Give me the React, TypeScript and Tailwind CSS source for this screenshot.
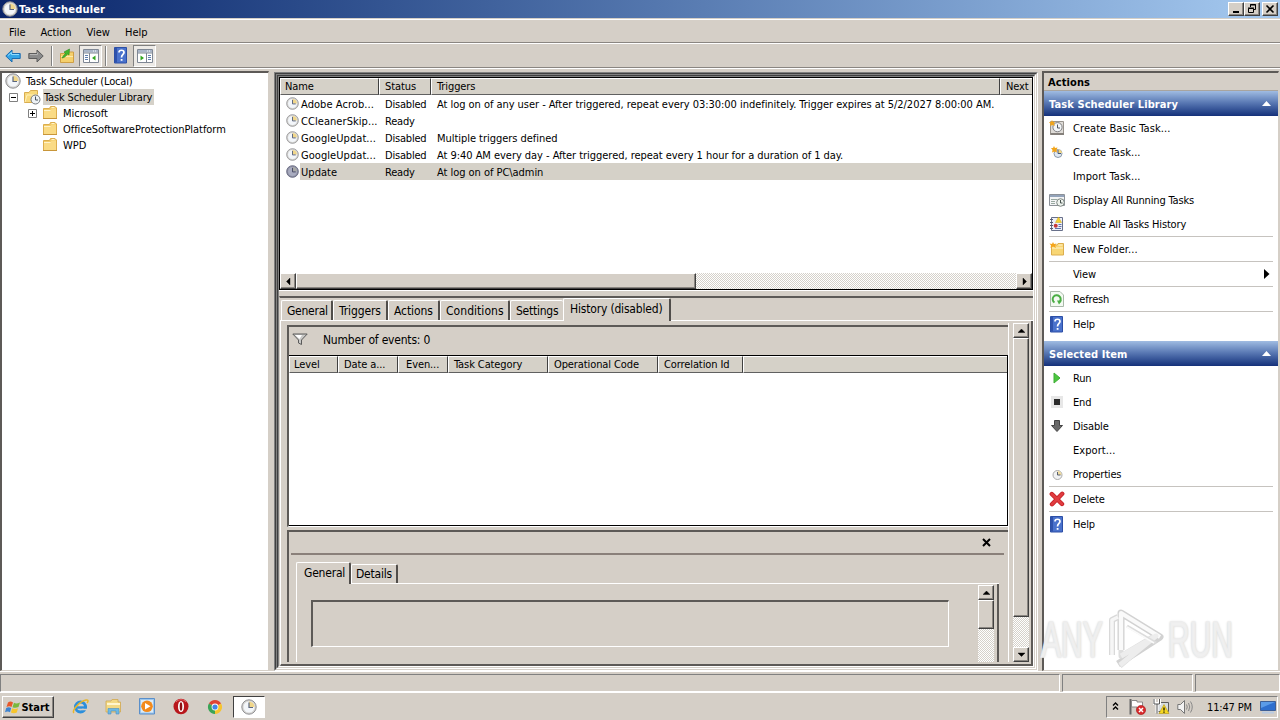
import React, { ReactNode } from "react";

interface BoxProps {
  className?: string;
  children?: ReactNode;
}

interface ActionItem {
  label: string;
  icon?: ReactNode;
  line?: boolean;
  arrow?: boolean;
}

/* ---------- Icons ---------- */

function ClockIcon({ size = 16, dark = false }: { size?: number; dark?: boolean }) {
  return (
    <svg width={size} height={size} viewBox="0 0 16 16" className="shrink-0">
      <circle cx="8" cy="8" r="7.2" fill={dark ? "#8e90a4" : "#d6d5d2"} stroke={dark ? "#5d5f78" : "#8f8f93"} strokeWidth="1" />
      <circle cx="8" cy="8" r="5.5" fill={dark ? "#a9acc0" : "#f3f6fa"} />
      <path d="M8 8V2.5A5.5 5.5 0 0 1 13.5 8z" fill={dark ? "#a8a9a6" : "#f0d68a"} />
      <path d="M8 3.5V8.5H12" fill="none" stroke={dark ? "#4a4c66" : "#5b6680"} strokeWidth="1.2" />
    </svg>
  );
}

function FolderIcon() {
  return (
    <svg width="16" height="16" viewBox="0 0 16 16" className="shrink-0">
      <path d="M1.5 3.5H7.500L8.500 1.500H13L14.500 3V13.500H1.500z" fill="#f3cc68" stroke="#dcae4e" />
      <path d="M2 5H8.500L9.500 3.500H14V13H2z" fill="#fadb85" />
      <path d="M9.500 2.500H12.500M2 5.500H8.500" stroke="#fff3cc" />
      <path d="M1 13.500H15" stroke="#c8963a" />
    </svg>
  );
}

function LibraryIcon() {
  return (
    <svg width="17" height="16" viewBox="0 0 17 16" className="shrink-0">
      <path d="M.5 3.5H5L6.500 1.500H13.500V13.500H.5z" fill="#f8d97c" stroke="#d9ad50" />
      <path d="M1 13L3 6H14" fill="none" stroke="#fff0ba" />
      <circle cx="11.500" cy="10.500" r="4.500" fill="#eef2f5" stroke="#74797e" />
      <path d="M11.500 7.500V11H14" fill="none" stroke="#47505c" />
    </svg>
  );
}

function NewFolderIcon() {
  return (
    <svg width="16" height="16" viewBox="0 0 16 16">
      <path d="M2.500 4H8L9 2.500H14.500V14H2.500z" fill="#f8d674" stroke="#dcae4e" />
      <path d="M9.500 4H13.500M3 7H14" stroke="#fff3cc" />
      <path d="M4 1L5 3 7.500 2.500 6 4.500 7 7 4 5.500 1.500 7 2 4.500 .5 2.500 3 3z" fill="#f5a51c" />
    </svg>
  );
}

function HelpIcon() {
  return (
    <svg width="16" height="17" viewBox="0 0 16 17">
      <path d="M1.500 .5H13.500V16H1.500z" fill="#4a72cc" stroke="#2c4fa6" />
      <path d="M2 1H4V15.500H2z" fill="#2f52ac" />
      <path d="M6 5.500C6 2.500 11 2.500 11 5.500C11 7.500 8.500 7.500 8.500 10.500" fill="none" stroke="#fff" strokeWidth="1.700" />
      <path d="M7.700 12H9.500V13.800H7.700z" fill="#fff" />
    </svg>
  );
}

function ArrowIcon({ back = false }: { back?: boolean }) {
  return back ? (
    <svg width="16" height="14" viewBox="0 0 16 14">
      <path d="M.8 7L7 1V4.500H15.200V9.500H7V13z" fill="#35a5e6" stroke="#1c6cb0" />
      <path d="M3 6.500L6.500 3.500V5.500H14" fill="none" stroke="#8fdcff" />
    </svg>
  ) : (
    <svg width="16" height="14" viewBox="0 0 16 14">
      <path d="M15.200 7L9 1V4.500H.8V9.500H9V13z" fill="#8b8b8b" stroke="#5c5c5c" />
      <path d="M2 5.500H9.500V3.500" fill="none" stroke="#b5b5b5" />
    </svg>
  );
}

function UpFolderIcon() {
  return (
    <svg width="16" height="16" viewBox="0 0 16 16">
      <path d="M1.500 5.500H7L8.500 4H14.500V14.500H1.500z" fill="#f5d06c" stroke="#cf9f45" />
      <path d="M2 8.500H14" stroke="#fdeaaa" />
      <path d="M3 10C4 8 5 7 6.500 5.500L5 4L10.500 1L10 7L8.500 6C7 8 6 9.500 3 10z" fill="#44b52c" stroke="#2c8a1c" strokeWidth=".6" />
    </svg>
  );
}

function PaneIcon({ flip = false }: { flip?: boolean }) {
  return (
    <svg width="16" height="14" viewBox="0 0 16 14">
      <path d="M.5 .5H15.500V13.500H.5z" fill="#fff" stroke="#7f8794" />
      <path d="M1 1H15V3.500H1z" fill="#aab6c8" />
      <path d="M10 2H14" stroke="#fff" strokeDasharray="1 1" />
      <path d="M.5 4H15.500" stroke="#7f8794" />
      {flip ? (
        <>
          <path d="M9.500 4V13.500" stroke="#7f8794" />
          <path d="M3.500 6.500V11.500L7 9z" fill="#32a51e" />
          <path d="M11 6.500H14M11 8.500H14M11 10.500H14" stroke="#5f7fae" />
        </>
      ) : (
        <>
          <path d="M6.500 4V13.500" stroke="#7f8794" />
          <path d="M12.500 6.500V11.500L9 9z" fill="#32a51e" />
          <path d="M2 6.500H5M2 8.500H5M2 10.500H5" stroke="#5f7fae" />
        </>
      )}
    </svg>
  );
}

function BasicTaskIcon() {
  return (
    <svg width="16" height="16" viewBox="0 0 16 16">
      <path d="M1.500 1.500H14.500V14.500H1.500z" fill="#dedbd7" stroke="#98938d" />
      <path d="M1.500 14H15" stroke="#85807b" strokeWidth="2" />
      <circle cx="8.500" cy="7.200" r="4.600" fill="#f3f6f8" stroke="#807f82" />
      <path d="M8.500 4.500V8H11" fill="none" stroke="#505763" />
      <path d="M3 0L4 2 6 1.500 5 4 6 6 3.500 5 1 6 1.500 4 0 2 2 2z" fill="#f0a51d" />
    </svg>
  );
}

function CreateTaskIcon() {
  return (
    <svg width="16" height="16" viewBox="0 0 16 16">
      <circle cx="9" cy="9.500" r="4" fill="#dfe8f3" stroke="#8a98a9" />
      <path d="M9 9V5.500A4 4 0 0 1 13 9z" fill="#f2d683" />
      <path d="M9 6V9.500H12" fill="none" stroke="#46597a" />
      <path d="M5 2L6 4 8.500 3.500 7.500 6 8 8.500 5.500 7.500 3 8.500 3.500 6 2 4 4 4z" fill="#f2a51a" />
    </svg>
  );
}

function RunningIcon() {
  return (
    <svg width="16" height="16" viewBox="0 0 16 16">
      <path d="M.5 2.500H15.500V13.500H.5z" fill="#f3f4f5" stroke="#8c9198" />
      <path d="M1 3H15V5H1z" fill="#93a3ba" />
      <path d="M2 7.500H8M2 9.500H6M2 11.500H6" stroke="#98a8a0" />
      <circle cx="11.500" cy="10.500" r="3.800" fill="#eef3ee" stroke="#7c8580" />
      <path d="M11.500 8V11H13.500" fill="none" stroke="#47524e" />
    </svg>
  );
}

function HistoryIcon() {
  return (
    <svg width="16" height="16" viewBox="0 0 16 16">
      <path d="M2.500 1.500H13.500V14.500H2.500z" fill="#eef0f8" stroke="#68708a" />
      <path d="M1 3.500H4M1 6.500H4M1 9.500H4M1 12.500H4" stroke="#555b70" />
      <path d="M9.500 1L12.500 6.500H6.500z" fill="#f5d22e" stroke="#caa21c" strokeWidth=".5" />
      <circle cx="6.700" cy="9.700" r="2" fill="#c63939" />
      <path d="M9.500 8.500H12.500M9.500 10.500H12.500M6 12.500H12" stroke="#6274a8" />
    </svg>
  );
}

function RefreshIcon() {
  return (
    <svg width="16" height="16" viewBox="0 0 16 16">
      <path d="M1.500 .5H11L14.500 4V15.500H1.500z" fill="#f3faf2" stroke="#a9b8a9" />
      <path d="M5.500 11.500A4 4 0 1 1 10.500 11" fill="none" stroke="#4aae44" strokeWidth="2" />
      <path d="M8 9.500L13 9.500L10 13.500z" fill="#4aae44" />
    </svg>
  );
}

function RunIcon() {
  return (
    <svg width="16" height="16" viewBox="0 0 16 16">
      <path d="M5 3L11 8L5 13z" fill="#4cc73f" stroke="#3fae36" />
    </svg>
  );
}

function EndIcon() {
  return (
    <svg width="16" height="16" viewBox="0 0 16 16">
      <path d="M2 2H14V14H2z" fill="#e7e7e7" />
      <path d="M5 5H11V11H5z" fill="#2b2b2b" />
    </svg>
  );
}

function DisableIcon() {
  return (
    <svg width="16" height="16" viewBox="0 0 16 16">
      <path d="M5.500 2.500H10.500V7.500H13.500L8 13.500L2.500 7.500H5.500z" fill="#6a6a6a" stroke="#444" />
    </svg>
  );
}

function PropertiesIcon() {
  return (
    <svg width="16" height="16" viewBox="0 0 16 16">
      <circle cx="8.500" cy="9" r="4.500" fill="#f1f2f3" stroke="#a9a9a9" />
      <path d="M8.500 9V5A4 4 0 0 1 12.500 9z" fill="#f1dca0" />
      <path d="M8.500 6V9H11.500" fill="none" stroke="#555f70" />
    </svg>
  );
}

function DeleteIcon() {
  return (
    <svg width="16" height="16" viewBox="0 0 16 16">
      <path d="M2.800 3L13 13M13.200 2.800L3 13.200" stroke="#c31d22" strokeWidth="4.400" strokeLinecap="round" />
      <path d="M2.800 3L13 13M13.200 2.800L3 13.200" stroke="#e03c40" strokeWidth="2.800" strokeLinecap="round" />
    </svg>
  );
}

function FilterIcon() {
  return (
    <svg width="16" height="14" viewBox="0 0 16 14">
      <path d="M.8 1H15.200L9.500 7V11.500L6.500 10V7z" fill="#c9c9c7" stroke="#5a5a5a" />
      <path d="M3 2H10L7.500 6z" fill="#fff" />
    </svg>
  );
}

function Triangle({ dir }: { dir: "up" | "down" | "left" | "right" }) {
  const paths = {
    up: "M0 5.500L3.500 2L7 5.500z",
    down: "M0 2H7L3.500 5.500z",
    left: "M5 0V7L1.500 3.500z",
    right: "M2 0V7L5.500 3.500z",
  };
  return (
    <svg width="7" height="7" viewBox="0 0 7 7">
      <path d={paths[dir]} fill="#000" stroke="#000" strokeWidth=".4" />
    </svg>
  );
}

/* ---------- Classic window parts ---------- */

function Raised({ className = "", children }: BoxProps) {
  return (
    <div className={`flex shrink-0 items-center justify-center border border-t-white border-l-white border-r-[#404040] border-b-[#404040] bg-[#d5cfc7] shadow-[inset_-1px_-1px_0_#8a8681] ${className}`}>
      {children}
    </div>
  );
}

function Sunken({ className = "", children }: BoxProps) {
  return (
    <div className={`border border-t-[#808080] border-l-[#808080] border-r-white border-b-white ${className}`}>
      {children}
    </div>
  );
}

function Track({ className = "" }: BoxProps) {
  return (
    <div className={`bg-[#ebe8e4] bg-[repeating-conic-gradient(#d5d1ca_0_25%,#fff_0_50%)] bg-[length:2px_2px] ${className}`} />
  );
}

// Pushes centered text down by one pixel
function Label({ className = "", children }: BoxProps) {
  return <span className={`pt-[2px] whitespace-nowrap ${className}`}>{children}</span>;
}

function HeaderCell({ className = "", children }: BoxProps) {
  return (
    <div className={`shrink-0 overflow-hidden border-t border-l border-r border-b border-t-white border-l-white border-r-[#404040] border-b-[#606060] bg-[#d5d1c8] pl-[5px] leading-4 tracking-[-0.1px] whitespace-nowrap ${className}`}>
      {children}
    </div>
  );
}

function Tab({ className = "", children }: BoxProps) {
  return (
    <div className={`shrink-0 rounded-t-[2px] border-t border-l border-t-white border-l-white border-r-2 border-r-[#504d4a] bg-[#d5cfc7] pl-[5px] text-[12px] whitespace-nowrap ${className}`}>
      {children}
    </div>
  );
}

/* ---------- Data ---------- */

const tasks = [
  { name: "Adobe Acrob...", status: "Disabled", trigger: "At log on of any user - After triggered, repeat every 03:30:00 indefinitely. Trigger expires at 5/2/2027 8:00:00 AM." },
  { name: "CCleanerSkip...", status: "Ready", trigger: "" },
  { name: "GoogleUpdat...", status: "Disabled", trigger: "Multiple triggers defined" },
  { name: "GoogleUpdat...", status: "Disabled", trigger: "At 9:40 AM every day - After triggered, repeat every 1 hour for a duration of 1 day." },
  { name: "Update", status: "Ready", trigger: "At log on of PC\\admin", selected: true },
];

const libraryActions: ActionItem[] = [
  { label: "Create Basic Task...", icon: <BasicTaskIcon /> },
  { label: "Create Task...", icon: <CreateTaskIcon /> },
  { label: "Import Task..." },
  { label: "Display All Running Tasks", icon: <RunningIcon /> },
  { label: "Enable All Tasks History", icon: <HistoryIcon />, line: true },
  { label: "New Folder...", icon: <NewFolderIcon />, line: true },
  { label: "View", arrow: true, line: true },
  { label: "Refresh", icon: <RefreshIcon />, line: true },
  { label: "Help", icon: <HelpIcon /> },
];

const itemActions: ActionItem[] = [
  { label: "Run", icon: <RunIcon /> },
  { label: "End", icon: <EndIcon /> },
  { label: "Disable", icon: <DisableIcon /> },
  { label: "Export..." },
  { label: "Properties", icon: <PropertiesIcon />, line: true },
  { label: "Delete", icon: <DeleteIcon />, line: true },
  { label: "Help", icon: <HelpIcon /> },
];

/* ---------- Sections ---------- */

function TitleBar() {
  return (
    <div className="flex h-[18px] shrink-0 items-center bg-linear-to-r from-[#0a246a] to-[#a6caf0] pr-[2px] pl-[2px] text-white">
      <ClockIcon />
      <Label className="ml-px flex-1 font-bold tracking-[0.17px]">Task Scheduler</Label>
      <Raised className="h-[14px] w-4">
        <svg width="10" height="10" viewBox="0 0 10 10"><path d="M2 8H8" stroke="#000" strokeWidth="2" /></svg>
      </Raised>
      <Raised className="h-[14px] w-4">
        <svg width="10" height="10" viewBox="0 0 10 10">
          <path d="M3.500 3V.5H8.500V5.500H7M3 1H9M1.500 4.500H6.500V8.500H1.500zM1 4H7" fill="none" stroke="#000" />
        </svg>
      </Raised>
      <Raised className="ml-[2px] h-[14px] w-4">
        <svg width="10" height="10" viewBox="0 0 10 10"><path d="M1.500 1.500L8.500 8.500M8.500 1.500L1.500 8.500" stroke="#000" strokeWidth="1.600" /></svg>
      </Raised>
    </div>
  );
}

function MenuBar() {
  return (
    <div className="mt-px flex h-6 shrink-0 items-center gap-[15px] border-t border-b border-t-white border-b-[#8a8681] pt-[2px] pl-[9px]">
      <Label>File</Label>
      <Label>Action</Label>
      <Label>View</Label>
      <Label>Help</Label>
    </div>
  );
}

function Toolbar() {
  return (
    <div className="flex h-[25px] shrink-0 items-center border-t border-b border-t-white border-b-[#8a8681] pl-[5px]">
      <ArrowIcon back />
      <div className="w-[7px]" />
      <ArrowIcon />
      <div className="ml-[7px] h-5 border-l border-r border-l-[#808080] border-r-white" />
      <div className="ml-[6px]"><UpFolderIcon /></div>
      <Sunken className="ml-[4px] flex h-[22px] w-[23px] items-center justify-center bg-[#edeae6] pt-px"><PaneIcon /></Sunken>
      <div className="ml-[3px] h-5 border-l border-r border-l-[#808080] border-r-white" />
      <div className="ml-[6px]"><HelpIcon /></div>
      <Sunken className="ml-[4px] flex h-[22px] w-[23px] items-center justify-center bg-[#edeae6] pt-px"><PaneIcon flip /></Sunken>
    </div>
  );
}

function Expander({ plus = false }: { plus?: boolean }) {
  return (
    <svg width="9" height="9" viewBox="0 0 9 9" className="shrink-0">
      <path d="M.5 .5H8.500V8.500H.5z" fill="#fff" stroke="#808080" />
      <path d={plus ? "M2 4.500H7M4.500 2V7" : "M2 4.500H7"} stroke="#000" />
    </svg>
  );
}

function TreePane() {
  return (
    <div className="w-[269px] shrink-0 border-t-2 border-l-2 border-r border-b border-t-[#5d5a57] border-l-[#5d5a57] border-r-[#d5cfc7] border-b-[#d5cfc7] bg-white">
      <div className="flex h-4 items-center pl-[3px]">
        <ClockIcon />
        <Label className="ml-[5px] tracking-[-0.18px]">Task Scheduler (Local)</Label>
      </div>
      <div className="flex h-4 items-center pl-[7px]">
        <Expander />
        <div className="ml-[6px] flex"><LibraryIcon /></div>
        <div className="ml-[2px] flex h-4 items-center bg-[#d5d1c8] pr-[2px] pl-px">
          <Label className="tracking-[-0.15px]">Task Scheduler Library</Label>
        </div>
      </div>
      <div className="flex h-4 items-center pl-[26px]">
        <Expander plus />
        <div className="ml-[5px]"><FolderIcon /></div>
        <Label className="ml-[5px]">Microsoft</Label>
      </div>
      {["OfficeSoftwareProtectionPlatform", "WPD"].map((name) => (
        <div key={name} className="flex h-4 items-center pl-10">
          <FolderIcon />
          <Label className="ml-[5px] tracking-[-0.05px]">{name}</Label>
        </div>
      ))}
    </div>
  );
}

function TaskList() {
  return (
    <div className="flex h-[213px] shrink-0 flex-col border border-black bg-white">
      <div className="flex h-[17px] shrink-0 overflow-hidden">
        <HeaderCell className="w-[99px] !pl-1">Name</HeaderCell>
        <HeaderCell className="w-[52px]">Status</HeaderCell>
        <HeaderCell className="w-[569px]">Triggers</HeaderCell>
        <HeaderCell className="w-[60px]">Next</HeaderCell>
      </div>
      <div className="flex-1">
        {tasks.map((task, index) => (
          <div key={index} className="flex h-[17px] items-center pl-[6px]">
            <ClockIcon size={13} dark={task.selected} />
            <div className={`ml-px flex h-[17px] flex-1 items-center pl-px ${task.selected ? "bg-[#d5d1c8]" : ""}`}>
              <Label className="w-[84px] tracking-[0.06px]">{task.name}</Label>
              <Label className="w-[52px] tracking-[-0.2px]">{task.status}</Label>
              <Label className="tracking-[-0.04px]">{task.trigger}</Label>
            </div>
          </div>
        ))}
      </div>
      <div className="flex h-4 shrink-0">
        <Raised className="w-4"><Triangle dir="left" /></Raised>
        <Raised className="w-[400px]" />
        <Track className="flex-1" />
        <Raised className="w-4"><Triangle dir="right" /></Raised>
      </div>
    </div>
  );
}

function EventPreview() {
  return (
    <div className="mt-[3px] flex min-h-0 flex-1 flex-col border-t-2 border-l-2 border-t-[#5d5a57] border-l-[#5d5a57]">
      <div className="mr-1 ml-[2px] flex h-[23px] shrink-0 items-center justify-end border-b-2 border-[#8a807a] pr-[13px]">
        <svg width="9" height="9" viewBox="0 0 9 9"><path d="M1 1L8 8M8 1L1 8" stroke="#000" strokeWidth="2" /></svg>
      </div>
      <div className="ml-[7px] flex h-[29px] shrink-0 items-end">
        <Tab className="h-[22px] w-[55px] !pl-[7px] leading-[21px] tracking-[-0.2px]">General</Tab>
        <div className="flex h-[29px] flex-1 items-end border-b border-white">
          <Tab className="h-[19px] w-[47px] !pl-[4px] leading-[19px] tracking-[-0.2px]">Details</Tab>
        </div>
        <div className="w-[9px]" />
      </div>
      <div className="mr-[9px] ml-[7px] flex min-h-0 flex-1 border-l border-r-2 border-l-white border-r-[#5d5a57]">
        <div className="flex-1 pt-4 pl-[14px]">
          <div className="h-[47px] w-[638px] border-t-2 border-l-2 border-r border-b border-t-[#5d5a57] border-l-[#5d5a57] border-r-white border-b-white" />
        </div>
        <div className="mr-[3px] flex w-4 flex-col pt-px">
          <Raised className="h-[15px]"><Triangle dir="up" /></Raised>
          <Raised className="h-[29px]" />
          <Track className="flex-1" />
        </div>
      </div>
    </div>
  );
}

function HistoryPane() {
  return (
    <div className="flex min-h-0 flex-1 flex-col border-t-2 border-l border-t-[#5d5a57] border-l-[#d5cfc7]">
      <div className="flex h-[23px] shrink-0 items-end">
        <div className="flex h-[23px] items-end border-b border-white pl-px tracking-[-0.1px]">
          <Tab className="h-5 w-[52px] leading-[21px] tracking-[-0.25px]">General</Tab>
          <Tab className="h-5 w-[55px] leading-[21px]">Triggers</Tab>
          <Tab className="h-5 w-[52px] leading-[21px]">Actions</Tab>
          <Tab className="h-5 w-[70px] leading-[21px] tracking-[0.05px]">Conditions</Tab>
          <Tab className="h-5 w-[53px] !border-r-0 leading-[21px] tracking-[-0.25px]">Settings</Tab>
        </div>
        <Tab className="h-[23px] w-[108px] !pl-[6px] leading-[21px] tracking-[-0.18px]">History (disabled)</Tab>
        <div className="flex-1 self-stretch border-b border-white" />
      </div>
      <div className="flex min-h-0 flex-1 border-r-2 border-b-2 border-l border-r-[#5d5a57] border-b-[#5d5a57] border-l-white pt-[2px] pb-[2px]">
        <div className="ml-[6px] flex w-[722px] flex-col border-r border-white pt-[2px]">
          <div className="flex h-[202px] shrink-0 flex-col border-t-2 border-l-2 border-b border-t-[#5d5a57] border-l-[#5d5a57] border-b-white">
            <div className="flex h-7 shrink-0 items-center pb-[2px] pl-[3px] text-[12px]">
              <FilterIcon />
              <span className="ml-[15px] tracking-[-0.2px]">Number of events: 0</span>
            </div>
            <div className="flex-1 border-t border-r border-b border-black bg-white">
              <div className="flex h-[17px]">
                <HeaderCell className="w-[49px] !pl-1">Level</HeaderCell>
                <HeaderCell className="w-[60px]">Date a...</HeaderCell>
                <HeaderCell className="w-[50px] !pl-[7px]">Even...</HeaderCell>
                <HeaderCell className="w-[100px]">Task Category</HeaderCell>
                <HeaderCell className="w-[110px]">Operational Code</HeaderCell>
                <HeaderCell className="w-[85px]">Correlation Id</HeaderCell>
                <HeaderCell className="w-[264px] !border-r-0" />
              </div>
            </div>
          </div>
          <EventPreview />
        </div>
        <div className="ml-[4px] flex w-4 flex-col">
          <Raised className="h-[15px]"><Triangle dir="up" /></Raised>
          <Raised className="h-[279px]" />
          <Track className="flex-1" />
          <Raised className="h-[15px]"><Triangle dir="down" /></Raised>
        </div>
      </div>
    </div>
  );
}

function CenterPane() {
  return (
    <Sunken className="mt-px ml-[5px] flex w-[764px] shrink-0">
      <Sunken className="flex flex-1 !border-t-[#404040] !border-l-[#404040] !border-r-[#d5cfc7] !border-b-[#d5cfc7]">
        <Sunken className="flex flex-1">
          <Sunken className="flex flex-1 !border-t-[#404040] !border-l-[#404040] !border-r-[#d5cfc7] !border-b-[#d5cfc7]">
            <Sunken className="flex w-[756px] flex-col bg-[#d5cfc7]">
              <TaskList />
              <div className="h-[6px] shrink-0 border-t border-white bg-[#d5cfc7]" />
              <HistoryPane />
            </Sunken>
          </Sunken>
        </Sunken>
      </Sunken>
    </Sunken>
  );
}

function ActionGroup({ title, items }: { title: string; items: ActionItem[] }) {
  return (
    <div>
      <div className="flex h-[25px] items-center justify-between bg-linear-to-b from-[#a0bce2] via-[#5574b0] to-[#15307a] pr-[7px] pl-[5px] font-bold text-white">
        <Label className="tracking-[0.1px]">{title}</Label>
        <svg width="9" height="5" viewBox="0 0 9 5"><path d="M0 5L4.500 0L9 5z" fill="#fff" /></svg>
      </div>
      {items.map((item) => (
        <div key={item.label}>
          <div className="flex h-6 items-center pr-[8px] pl-[5px]">
            <div className="flex w-6 shrink-0">{item.icon}</div>
            <Label className={`flex-1 ${item.label.endsWith("...") ? "tracking-[0.07px]" : "tracking-[-0.16px]"}`}>{item.label}</Label>
            {item.arrow && (
              <svg width="6" height="10" viewBox="0 0 6 10"><path d="M0 0L5.500 5L0 10z" fill="#000" /></svg>
            )}
          </div>
          {item.line && <div className="mr-[5px] ml-[5px] h-px bg-[#c6c3bf]" />}
        </div>
      ))}
    </div>
  );
}

function ActionsPane() {
  return (
    <div className="ml-1 flex w-[237px] shrink-0 flex-col border-t-2 border-r border-b border-l-2 border-t-[#5d5a57] border-r-[#d5cfc7] border-b-[#d5cfc7] border-l-[#5d5a57] bg-white">
      <div className="flex h-[18px] shrink-0 items-center border-b border-[#a8a49e] bg-[#d5cfc7] pl-1 font-bold">
        <Label className="tracking-[0.1px]">Actions</Label>
      </div>
      <ActionGroup title="Task Scheduler Library" items={libraryActions} />
      <div className="h-[5px]" />
      <ActionGroup title="Selected Item" items={itemActions} />
    </div>
  );
}

function StatusBar() {
  return (
    <div className="flex h-[18px] shrink-0 gap-[2px]">
      <Sunken className="w-[1060px]" />
      <Sunken className="w-[131px]" />
      <Sunken className="flex-1" />
    </div>
  );
}

function Taskbar() {
  return (
    <div className="flex h-7 shrink-0 items-center border-t border-white pr-[2px] pl-[2px]">
      <Raised className="h-[22px] w-[52px] pr-px font-bold">
        <svg width="16" height="16" viewBox="0 0 16 16">
          <path d="M3 3.500C5 2 6.500 2.500 8 3.500L6.500 8C5 7 3.500 7 1.500 8z" fill="#e8582a" />
          <path d="M9 3.800C11 5 12.500 4.500 15 3.500L13.500 8C11.500 9 9.500 9 7.500 8.200z" fill="#7ab83c" />
          <path d="M1.200 9C3 8 4.500 8 6.200 9L5 13.300C3.500 12.300 2 12.300 0 13.300z" fill="#3d83d0" />
          <path d="M7.200 9.300C9 10.300 11 10.300 13 9.300L11.800 13.500C9.800 14.500 8 14.500 5.900 13.500z" fill="#f7c52c" />
        </svg>
        <Label>Start</Label>
      </Raised>
      <div className="ml-[18px] flex flex-1 items-center">
        <svg width="17" height="17" viewBox="0 0 17 17">
          <circle cx="8.500" cy="9" r="5" fill="none" stroke="#2b8fdc" strokeWidth="3" />
          <path d="M4 9.500H15" stroke="#2b8fdc" strokeWidth="2.400" />
          <path d="M10 11.500H16" stroke="#d5cfc7" strokeWidth="1.500" />
          <path d="M2 15C-1 13 8 3 14 2C17 1.500 16 4 15 5" fill="none" stroke="#e8b62a" strokeWidth="1.500" />
        </svg>
        <svg width="17" height="17" viewBox="0 0 17 17" className="ml-[16px]">
          <path d="M1 3H6L7 1.500H13V4H15.500V14H1z" fill="#f3da86" stroke="#d0a850" strokeWidth=".8" />
          <path d="M2 6H15" stroke="#fff6cf" strokeWidth="2" />
          <path d="M3 16V10.500H14V16H11V13H6V16z" fill="#6db9e4" stroke="#4d8fc0" strokeWidth=".6" />
        </svg>
        <svg width="16" height="17" viewBox="0 0 16 17" className="ml-[17px]">
          <path d="M.5 .5H15.500V16H.5z" fill="#9cc6ec" stroke="#5a8fca" />
          <path d="M2 2H14V14.500H2z" fill="#dcecf8" />
          <circle cx="8" cy="8.300" r="5.800" fill="#f28a1c" />
          <path d="M6 5L11.500 8.300L6 11.500z" fill="#fff" />
        </svg>
        <svg width="16" height="17" viewBox="0 0 16 17" className="ml-[18px]">
          <ellipse cx="8" cy="8.500" rx="7.500" ry="7.800" fill="#b8171c" />
          <path d="M3 4C5 1 11 1 13 4" fill="none" stroke="#e56a6a" />
          <ellipse cx="8" cy="8.500" rx="3" ry="5.500" fill="#fff" />
          <ellipse cx="8" cy="8.500" rx="1.300" ry="4.300" fill="#8e1013" />
        </svg>
        <svg width="16" height="16" viewBox="0 0 16 16" className="ml-[18px]">
          <path d="M8 8L1.900 4.500A7 7 0 0 1 14.100 4.500z" fill="#df4334" />
          <path d="M8 8L14.100 4.500A7 7 0 0 1 8 15z" fill="#f6c42f" />
          <path d="M8 8V15A7 7 0 0 1 1.900 4.500z" fill="#3ba457" />
          <circle cx="8" cy="8" r="3.400" fill="#fff" />
          <circle cx="8" cy="8" r="2.600" fill="#4285e8" />
        </svg>
        <Sunken className="ml-[10px] flex h-[22px] w-8 items-center justify-center bg-white !border-t-[#404040] !border-l-[#404040]">
          <ClockIcon />
        </Sunken>
      </div>
      <Sunken className="flex h-[22px] w-[172px] items-center pl-1">
        <svg width="9" height="12" viewBox="0 0 9 12"><path d="M2 4.500L4.500 2L7 4.500M2 8.500L4.500 6L7 8.500" fill="none" stroke="#000" strokeWidth="1.400" /></svg>
        <svg width="18" height="17" viewBox="0 0 18 17" className="ml-[9px] shrink-0">
          <path d="M1.500 1V16.500" stroke="#666" strokeWidth="2" />
          <path d="M2.500 2.500H8V4H13.500V10.500H8V9H2.500z" fill="#fff" stroke="#8a8a8a" />
          <circle cx="12" cy="12" r="4.600" fill="#d8292b" stroke="#a51618" strokeWidth=".6" />
          <path d="M10 10L14 14M14 10L10 14" stroke="#fff" strokeWidth="1.500" />
        </svg>
        <svg width="17" height="17" viewBox="0 0 17 17" className="ml-[6px] shrink-0">
          <path d="M6 4.500H15.500V13.500H4.500V7z" fill="#d8dde0" stroke="#5c5c5c" />
          <path d="M1.500 1V5.500H6.500V1M4 5.500V15" fill="none" stroke="#fff" strokeWidth="3" />
          <path d="M1 1V6H6.500V1M4 6V15.500" fill="none" stroke="#555" />
          <path d="M11 6.500L16 15.500H6z" fill="#f7d822" stroke="#b4960f" strokeWidth=".6" />
          <path d="M11 9.500V12.500M11 13.500V14.700" stroke="#000" strokeWidth="1.200" />
        </svg>
        <svg width="17" height="16" viewBox="0 0 17 16" className="ml-[7px] shrink-0">
          <path d="M.8 5.500H3.500L7.500 1.500V14.500L3.500 10.500H.8z" fill="#f3f3f3" stroke="#777" />
          <path d="M9.500 5.500Q11 8 9.500 10.500M11.500 4Q14 8 11.500 12M13.500 2.500Q17 8 13.500 13.500" fill="none" stroke="#888" />
        </svg>
        <Label className="ml-[13px] w-[45px] tracking-[-0.15px]">11:47 PM</Label>
        <svg width="16" height="14" viewBox="0 0 16 14" className="ml-2 shrink-0">
          <path d="M.5 1.500H15.500V10.500H.5z" fill="#2f6fce" stroke="#3e5f96" />
          <path d="M1 2H15L1 8z" fill="#5b9be8" />
          <path d="M2 12.500H14" stroke="#b9cbe2" strokeWidth="2" />
        </svg>
      </Sunken>
    </div>
  );
}

function Watermark() {
  return (
    <div className="pointer-events-none absolute top-[608px] left-[1041px] flex h-16 w-[194px] items-center text-[#f0f0f0]">
      <span className="w-[65px] origin-left scale-x-[0.6] font-['Liberation_Sans'] text-[50px] leading-[64px] [-webkit-text-stroke:1.5px_#eeeeee] [text-shadow:0_0_3px_#b4b4b4]">ANY</span>
      <svg width="62" height="64" viewBox="0 0 62 64" className="shrink-0">
        <g fill="none" strokeLinejoin="round">
          <path d="M15 42V5L54 29L12 56" stroke="#d2d2d2" strokeWidth="7" />
          <path d="M6 47V12L12 9" stroke="#d9d9d9" strokeWidth="6" />
          <path d="M15 5V48L50 27L14 58" stroke="#dedede" strokeWidth="5" />
          <path d="M15 42V5L54 29" stroke="#fafafa" strokeWidth="4" />
          <path d="M6 47V12L12 9" stroke="#f6f6f6" strokeWidth="3.500" />
          <path d="M15 48L50 28L14 57" stroke="#ededed" strokeWidth="5" />
          <path d="M21 18L50 35" stroke="#dcdcdc" strokeWidth="3" />
          <path d="M21 19L48 35" stroke="#fafafa" strokeWidth="1.500" />
        </g>
      </svg>
      <span className="w-[64px] origin-left scale-x-[0.6] font-['Liberation_Sans'] text-[50px] leading-[64px] [-webkit-text-stroke:1.5px_#eeeeee] [text-shadow:0_0_3px_#b4b4b4]">RUN</span>
    </div>
  );
}

export default function App() {
  return (
    <div className="relative flex h-[720px] w-[1280px] flex-col overflow-hidden bg-[#d5cfc7] font-['DejaVu_Sans_Condensed','DejaVu_Sans',sans-serif] text-[11px] leading-[14px] text-black [font-stretch:condensed]">
      <TitleBar />
      <MenuBar />
      <Toolbar />
      <div className="h-px shrink-0 bg-white" />
      <div className="mt-[2px] flex h-[600px] shrink-0">
        <TreePane />
        <CenterPane />
        <ActionsPane />
      </div>
      <div className="h-[3px] shrink-0 border-t border-white" />
      <StatusBar />
      <Taskbar />
      <Watermark />
    </div>
  );
}
